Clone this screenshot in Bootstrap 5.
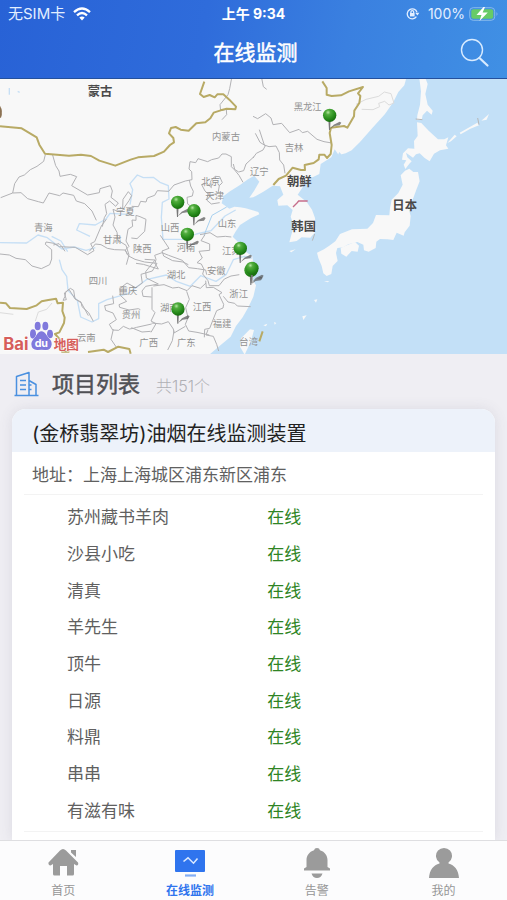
<!DOCTYPE html>
<html lang="zh-CN">
<head>
<meta charset="utf-8">
<meta name="viewport" content="width=device-width, initial-scale=1">
<title>在线监测</title>
<link href="https://cdn.jsdelivr.net/npm/bootstrap@5.3.0/dist/css/bootstrap.min.css" rel="stylesheet">
<style>
body{font-family:Inter,"Noto Sans CJK SC",sans-serif;background:#efeef3;color:#606060}
.top-area{background:linear-gradient(100deg,#2862d6 0%,#2f6cdb 40%,#3a80e0 68%,#4090e4 100%);border-bottom:1px solid #24509c}
.status-row{height:28px;font-size:14px;line-height:28px;padding:0 8px;color:#e4efff}
.carrier{font-size:15px}
.title-row{height:50px;padding:0 16px 0 20px}
.title-row h1{font-size:21px;line-height:50px;font-weight:400;color:#fff;-webkit-text-stroke:.5px #fff}
.side{flex:1 1 0}
.map-view{display:block;width:100%;height:auto;font-family:"Noto Sans CJK SC",sans-serif}
.province{font-size:28px;fill:#929292}
.country{font-size:37px;font-weight:700;fill:#4a4a4a}
.list-head{height:55px;padding:5px 14px 0}
.list-head h2{font-size:22px;line-height:32px;font-weight:400;color:#505055;-webkit-text-stroke:.5px #505055}
.list-head svg{margin-right:13px}
.total{font-size:16px;line-height:24px;color:#b0b0b5;font-weight:300}
.project{margin:0 12px;border-radius:14px 14px 0 0;box-shadow:0 0 14px rgba(80,80,110,.12)}
.project-title{height:43px;line-height:50px;padding:0 20px;background:#edf2fa;color:#222;font-size:20px;font-weight:400;border-radius:14px 14px 0 0}
.project-body{padding:0 12px;font-size:17px}
.address{height:43px;line-height:46px;padding:0 8px;border-bottom:1px solid #f3f3f3}
.device-list{padding:4px 0 2px;border-bottom:1px solid #f3f3f3}
.devices{width:100%;height:330px;line-height:24px}
.devices th{width:53%;padding:0 0 0 43px;font-weight:400}
.devices td{padding:0;color:#2e8423}
.tabs{background:#fcfcfd;border-top:1px solid #dedee1;height:60px}
.tab-item{color:#969696;font-size:12px;line-height:16px;padding-top:6px}
.tab-item svg{display:block;margin:0 auto 4px}
.tab-item.current{color:#2f74ee;font-weight:700}
</style>
<script src="https://cdn.jsdelivr.net/npm/bootstrap@5.3.0/dist/js/bootstrap.bundle.min.js"></script>
</head>
<body>
<div class="vh-100 d-flex flex-column overflow-hidden">
<header class="top-area flex-shrink-0">
  <div class="status-row d-flex align-items-center">
    <div class="side d-flex align-items-center gap-2"><span class="carrier">无SIM卡</span>
      <svg width="18" height="14" viewBox="0 0 18 14" fill="none" stroke="#fff" stroke-width="2.3"><path d="M1 5.2Q9-2.2 17 5.2M4 8.3Q9 3.7 14 8.3"/><path d="M6.3 10.6Q9 8.3 11.7 10.6L9 13.5z" fill="#fff" stroke="none"/></svg></div>
    <div class="fw-bold text-white">上午 9:34</div>
    <div class="side d-flex align-items-center justify-content-end gap-1">
      <svg class="me-1" width="14" height="12" viewBox="0 0 14 12" fill="none" stroke="#e4efff" stroke-width="1.3"><path d="M10.4 8.7A5 5 0 1 1 11 4.3"/><path d="M9.2 4.8h4.2l-2 2.7z" fill="#e4efff" stroke="none"/><rect x="4" y="5" width="4.6" height="3.4" fill="#e4efff" stroke="none"/><path d="M4.9 5V4a1.4 1.4 0 0 1 2.8 0v1"/></svg>
      <span>100%</span>
      <svg width="30" height="16" viewBox="0 0 30 16"><rect x=".7" y="1.7" width="25" height="12.6" rx="3.5" fill="none" stroke="#86b9ec"/><rect x="2.3" y="3.3" width="22" height="9.4" rx="2" fill="#67cb67"/><path d="M27.5 6q2 2 0 4z" fill="#86b9ec"/><path d="M14.5 1 7.5 9h5l-2 6 8.3-8.5h-5.2L16 1z" fill="#fff"/></svg></div>
  </div>
  <div class="title-row d-flex align-items-center">
    <div class="side"></div><h1 class="m-0">在线监测</h1>
    <div class="side text-end"><button type="button" class="btn p-0 border-0" aria-label="搜索"><svg width="32" height="32" viewBox="0 0 32 32" fill="none" stroke="#d8ebff" stroke-linecap="round"><circle cx="13" cy="13" r="10.5" stroke-width="1.4"/><path d="m20.500 21 8 7.500" stroke-width="2.2"/></svg></button></div>
  </div>
</header>
<main class="flex-grow-1 d-flex flex-column overflow-hidden">
<svg class="map-view flex-shrink-0" viewBox="0 3 1521 825" role="img" aria-label="地图">
  <defs>
    <radialGradient id="ball" cx=".38" cy=".28" r=".7"><stop offset="0" stop-color="#b4e6a2"/><stop offset=".25" stop-color="#52ad3f"/><stop offset=".65" stop-color="#2c911f"/><stop offset="1" stop-color="#18700f"/></radialGradient>
    <filter id="soft" x="-20%" y="-20%" width="140%" height="140%"><feGaussianBlur stdDeviation="2"/></filter>
    <g id="pin"><path d="M0 42 12 28 30 19 35 22 30 30 14 32z" fill="#555" opacity=".7" filter="url(#soft)"/><path d="M-4 12h7L1 44h-3z" fill="#777"/><circle r="20" fill="url(#ball)"/></g>
  </defs>
  <path fill="#c3e0f7" d="M0 0h1521v830H0z"/>
  <g fill="#f8f8f8">
    <path d="M0 0H1219L1213 22 1195 42 1180 72 1155 108 1115 152 1080 192 1055 217 1037 226 1016 231 1004 214 994 238 962 258 958 288 916 308 908 328 893 350 920 372 936 395 945 420 949 458 931 479 905 478 890 489 868 493 874 470 882 444 872 416 878 396 862 382 835 383 832 366 850 350 840 325 818 323 790 341 760 358 748 359 762 339 778 311 763 293 744 304 720 321 690 340 670 355 665 376 688 392 703 386 720 388 737 391 775 402 778 409 752 421 720 441 706 462 698 476 712 490 728 500 735 520 757 535 760 561 744 567 764 580 758 606 768 622 760 656 745 688 728 718 708 744 692 776 654 808 628 830H0z"/>
    <path d="M750 754 762 756 753 790 734 830 720 806 724 780z"/>
    <path d="M1258 0H1276L1283 18 1276 48 1283 80 1298 98 1295 110 1281 98 1268 112 1265 126 1251 126 1252 112 1260 80 1263 40z"/>
    <path d="M1251 133 1264 135 1286 158 1314 184 1333 184 1345 178 1338 202 1345 212 1320 217 1302 227 1289 250 1274 240 1259 226 1248 229 1239 239 1218 224 1222 238 1235 250 1228 257 1216 273 1211 260 1219 247 1206 245 1209 226 1224 211 1243 212 1242 189 1253 174z"/>
    <path d="M1215 278 1228 272 1240 282 1254 282 1259 310 1249 335 1238 365 1228 398 1232 414 1229 443 1214 463 1211 473 1190 464 1180 486 1162 484 1140 483 1129 491 1127 510 1106 521 1092 517 1090 500 1072 492 1045 499 1030 508 1012 510 1008 525 1013 549 998 564 994 588 980 594 970 586 965 564 955 540 951 524 972 514 990 502 1006 490 1020 468 1056 454 1102 452 1119 435 1128 411 1168 412 1170 390 1175 365 1195 345 1208 320 1202 292z"/>
    <path d="m1022 510 22-10 21-8 12 11-4 18-18-2-16 17-15-9zM1342 195l22-25 6 5-17 15zM1379 164l53-30 5 8-26 10-29 17zM1444 128l23-20-7 17zM868 519l19-5-13 9zM907 715l13-3-10 14zM942 666l10-2-4 10zM790 742l12-5-4 8zM972 610l16-1-5 4zM822 732l7 3-5 5z"/>
  </g>
  <path d="m1018 222-4 8 12 7-3-9z" fill="#c3e0f7"/>
  <g fill="none" stroke="#c6dff5" stroke-width="4" stroke-linejoin="round">
    <path d="m390 380 8-45-8-18 22-26 18 8 30-1 20 15 25 10 2 40-20 10-3 45 5 66 60 0 40-16 44-10 42-44 32-18M0 494l80 1 34-24 28 8 44 34 36-6 36 10 28-8M270 475l-40-19 8-19 48 4 32-18 12-17 52 3 10-20M155 475l28 14 20 32M178 545l8 30 14 20 4 42 28 30 10 50 34 15 20-10 0-45 25-12 62-18 56-42 60-14 30 19 42 15 31-32 46 17 31-21 21-44 34-10 22 5"/>
    <path d="m612 472 24-60 44-25" stroke="#a9d1ef" stroke-width="3"/><path d="M28 30v20m25-10 6 3"/>
  </g>
  <g fill="none" stroke="#b2b2b5" stroke-width="3" stroke-linejoin="round">
    <path d="m136 230-5 20-20 15-20 10-18 16-16 6-13 20-6 28-36 14M38 345l25-1 20 18 32 9 15 4 17-30 32 8 10-8 32 7 8 17 25 8 22 22 13 28M157 228l10 35 10 16 3 16 31-6 19 7-15 27 48 28 35-7 2-12 31-9 6 16-4 19 22 17-8 10-18-16-14 10 5 28-7 12-6 27M368 390l1-26 16-23 10 12-8 15-12 17-8 13-16 1-12-5 6 23-6 24 12 22 3 24 24 15 9 29-8 29M395 385l20 1 7-16 16 2 4-12 22-8 8-14 34 2 16-19 34-12 20-4-1-24-8-8 3-22 17 3 7-12 29 9 12-6 21-5 10-12 12 0 16 8 0 30 10 10 13 16 12 21M700 258l4 16 12 8 15-4 7-20 24-22M568 306l4 18 8 16-3 14-16 4 2 20 14 10M605 320l15-5 14 14-2-20 13-14 14 1 8 18-9 9-4 23-25 6-14-13zM625 345l-5 21 14 12 25-4M759 240l10-14 20-10 7-13-16-10-14-27M695 0l-6 32-5 18-24 30 2 18 17-4 1 16-14 15M759 115l14 7 24-15 16 13 6 20 26-4 24 28 28-10 10 10 16-4 28 24 21 7 24 4M778 155l15 46 14 5 21-2 10 20 1 22 12 15 4 25M785 0l5 26 10 8"/>
    <path d="m0 528 28 3 20 10 28 4 20 19 28 8 25-12 6-17 0-28-19-16 2-7 24 4 16 10 48 2 37 22 19-12-10-21 12-6 20-47 15-20M160 501l17-4 8 8 10 15M268 520l18-22 17 2 19 11 22 4 31 1 11 18 19 10 29 8 37 4-14 23-34 10 4 26-20 14-26-14-22 17 2 20 19 18-23 10 2 8 28 8 28-4 6 3M382 530l-6-14 11-11-9-16 6-35 14-9-2-19 12 1 0-15 12 4 18 8-4 36-23 22-17-2M408 556l22 3 45 14-10-17 3-12-4-12 22-8 20 8 41 15 19 22 26 3 25 4 3 14M434 544l31 2-28 35 2 19 36 18-38 7-11 14 3 16 26 2M456 628l0 66 9 10-12 25 15 8-15 26M460 624l32-4 26 10 18-2 25 10 15-15 25 8 17-16M481 472l26 39-21 8 5 15 27 14 31 4 16 8M600 470l30-6 21 13 25-2 18 2M615 470l-12 18 26 10 0 19-32 3 10 20-16 14 13 4 8 16-4 14 16 20 4 15 29 0 16-20 20-9 25-4M617 608l2 21 21-1 26 16-9 6 14 29-2 11-19 8-10 25-11 28-15 3-1 24M670 655l14 17 20 4 8 8 40 2M560 640l8 24-11 25 7 30-8 20 10 20 25 4 37 8M455 735l30 3 20-7 15 22 2 12 34-20M455 738l-45 10-10 3-12 2-18-8-14 12-18-1-10-17 21-14-10-20-22-8-3-14 27-6-3-24M280 730l-14-26-20-18-3-14-18-9-4-26-10-6-14 12-2 12-6 12 10-2-6-20 14-11 17 27 20 14 21 38M452 760l-26 2-32-13M522 758l-5 30-14 28M624 755l-6 16 22 4 10 24 6 20M340 754l-7 30 17 25"/>
  </g>
  <path d="m1085 94 34 1 20-9-3-10 18-6 13 11 15-6-9-28-20-5-17 13-38 9-30 15M106 729l9-27 25-8 16-19M0 704l40 5" fill="none" stroke="#dcdcdc" stroke-width="3"/>
  <g fill="none" stroke="#b8aa65" stroke-width="6" stroke-linejoin="round">
    <path d="m0 145 65 6 45 27 8 22 17 27 72 6 36-3 30 4 25 14 48 15 46-18 22-7 48-4 30-13 18-20 12-8-2-13-13-14 6-16 14-3 15 8 24 3 23-22 27-3 15-12 10-17 21-7 18-5 26 2 2-8-20-21-18-16-18 0-8 9-15-7-18 6-11-9 13-37M967 10l13 20 0 20 15 4 28-2 24-12 42-13-15 19 7 8-3 21-15 23-1 17-20 34-10-5-39 5-4 16 6 36-3 27-11 12-8-10-15 0-2 14-15 11-27 6 1 15-12 0-25-7-20 24-22 10-16 18"/>
    <path d="m0 674 18 2 12 14 50 3 30-11 15-12 20-4 23-4 5 14 16-2-2 25 7 20-2 16-14 28-13 5 20 22 1 31 22 0M264 822l47-7 13 7 31-16 33 7 4 14M788 760l-10 30"/>
  </g>
  <path d="M879 387l12-12 5-6 27 0" fill="none" stroke="#c66d8a" stroke-width="4"/>
  <path d="m1247 123 20 2M1433 120l4 20M944 468l-7 20" fill="none" stroke="#b7b7b7" stroke-width="3"/>
  <path d="M0 83q10 16 3 36H0z" fill="#8c7253"/>
  <g class="province">
    <text x="636" y="187">内蒙古</text><text x="881" y="95">黑龙江</text><text x="854" y="220">吉林</text><text x="750" y="291">辽宁</text><text x="604" y="321">北京</text><text x="616" y="364">天津</text><text x="348" y="412">宁夏</text><text x="102" y="459">青海</text><text x="309" y="495">甘肃</text><text x="399" y="523">陕西</text><text x="482" y="459">山西</text><text x="653" y="446">山东</text><text x="530" y="520">河南</text><text x="666" y="527">江苏</text><text x="500" y="600">湖北</text><text x="621" y="588">安徽</text><text x="266" y="619">四川</text><text x="356" y="647">重庆</text><text x="688" y="656">浙江</text><text x="480" y="698">湖南</text><text x="578" y="695">江西</text><text x="365" y="721">贵州</text><text x="638" y="746">福建</text><text x="231" y="789">云南</text><text x="418" y="803">广西</text><text x="531" y="803">广东</text><text x="718" y="802">台湾</text>
  </g>
  <g class="country"><text x="263" y="55">蒙古</text><text x="861" y="325">朝鲜</text><text x="874" y="459">韩国</text><text x="1177" y="395">日本</text></g>
  <use href="#pin" x="989" y="112"/><use href="#pin" x="533" y="373"/><use href="#pin" x="582" y="398"/><use href="#pin" x="562" y="469"/><use href="#pin" x="721" y="511"/><use href="#pin" x="753" y="577"/><use href="#pin" x="756" y="571"/><use href="#pin" x="534" y="693"/>
  <g font-weight="700" stroke="#fff" stroke-width="3" paint-order="stroke">
    <g fill="#8079dc"><ellipse cx="99" cy="768" rx="9" ry="14"/><ellipse cx="113" cy="744" rx="9" ry="13"/><ellipse cx="136" cy="744" rx="9" ry="13"/><ellipse cx="150" cy="768" rx="9" ry="13"/><path d="M124 760q9 0 16 12c8 12 16 15 15 28q-3 18-20 16-10-2-22 0-18 1-19-17c0-11 9-17 15-27q7-12 15-12z"/></g>
    <text x="10" y="815" font-size="50" font-family="Inter,sans-serif" fill="#d65e5b">Bai</text>
    <text x="104" y="808" font-size="32" font-family="Inter,sans-serif" fill="#fff" stroke="none">du</text>
    <text x="161" y="813" font-size="38" fill="#d65e5b">地图</text>
  </g>
</svg>
<div class="list-head d-flex align-items-center flex-shrink-0">
  <svg width="25" height="26" viewBox="0 0 25 26" fill="none" stroke="#4a90e0" stroke-width="1.5" stroke-linejoin="round"><path d="M.5 24.5h24M2.5 24V5.5L15 1.500V24M15 9.500l7 4V24M6 9.500h6M6 14h6M6 18.500h6M15 14h2.500M15 18.500h2.500"/></svg>
  <h2 class="m-0 me-3">项目列表</h2><span class="total pt-1">共151个</span>
</div>
<section class="project bg-white flex-grow-1">
  <h3 class="project-title m-0">(金桥翡翠坊)油烟在线监测装置</h3>
  <div class="project-body">
    <div class="address">地址：上海上海城区浦东新区浦东</div>
    <div class="device-list">
    <table class="devices"><tbody>
      <tr><th scope="row">苏州藏书羊肉</th><td>在线</td></tr>
      <tr><th scope="row">沙县小吃</th><td>在线</td></tr>
      <tr><th scope="row">清真</th><td>在线</td></tr>
      <tr><th scope="row">羊先生</th><td>在线</td></tr>
      <tr><th scope="row">顶牛</th><td>在线</td></tr>
      <tr><th scope="row">日源</th><td>在线</td></tr>
      <tr><th scope="row">料鼎</th><td>在线</td></tr>
      <tr><th scope="row">串串</th><td>在线</td></tr>
      <tr><th scope="row">有滋有味</th><td>在线</td></tr>
    </tbody></table>
    </div>
  </div>
</section>
</main>
<nav class="tabs d-flex flex-shrink-0 position-relative" aria-label="主导航">
  <a href="#home" class="tab-item flex-fill w-25 text-center text-decoration-none"><svg width="32" height="32" viewBox="0 0 32 32" fill="#9b9b9b"><path d="M16 2q1.500 0 3 1.500L31 15.500q1 2.500-1.500 3L27 17v10q0 1.500-1.500 1.500H20V19h-7v9.500H7.500Q6 28.500 6 27V17l-2.500 1.500Q1 18 1.500 15.500L13 3.500Q14.500 2 16 2zM24 3h5v7l-5-4.500z"/></svg>首页</a>
  <a href="#monitor" class="tab-item current flex-fill w-25 text-center text-decoration-none" aria-current="page"><svg width="32" height="32" viewBox="0 0 32 32"><rect x="1" y="3" width="30" height="22" rx="1" fill="#2f74ee"/><path d="M9.500 14.500 14 10.800l5.500 5.400 4-4.700" fill="none" stroke="#d9e8ff" stroke-width="1.600"/><path d="M11 28.500h11" stroke="#82aef5" stroke-width="2.200"/></svg>在线监测</a>
  <a href="#alerts" class="tab-item flex-fill w-25 text-center text-decoration-none"><svg width="32" height="32" viewBox="0 0 32 32" fill="#9b9b9b"><path d="M16 1q2.500 0 3 2.200c5 1.500 7.500 5.500 7.500 10V20l2.500 1.500V23.500H3v-2L5.500 20v-6.800c0-4.500 2.500-8.500 7.500-10Q13.500 1 16 1zM10.500 26.500h11Q20 31 16 31t-5.500-4.500z"/></svg>告警</a>
  <a href="#me" class="tab-item flex-fill w-25 text-center text-decoration-none"><svg width="32" height="32" viewBox="0 0 32 32" fill="#9b9b9b"><path d="M1 31c.5-8 4.500-13 10.500-14.500v-1a8 8 0 1 1 9 0v1C26.500 18 30.500 23 31 31z"/></svg>我的</a>
</nav>
</div>
</body>
</html>
